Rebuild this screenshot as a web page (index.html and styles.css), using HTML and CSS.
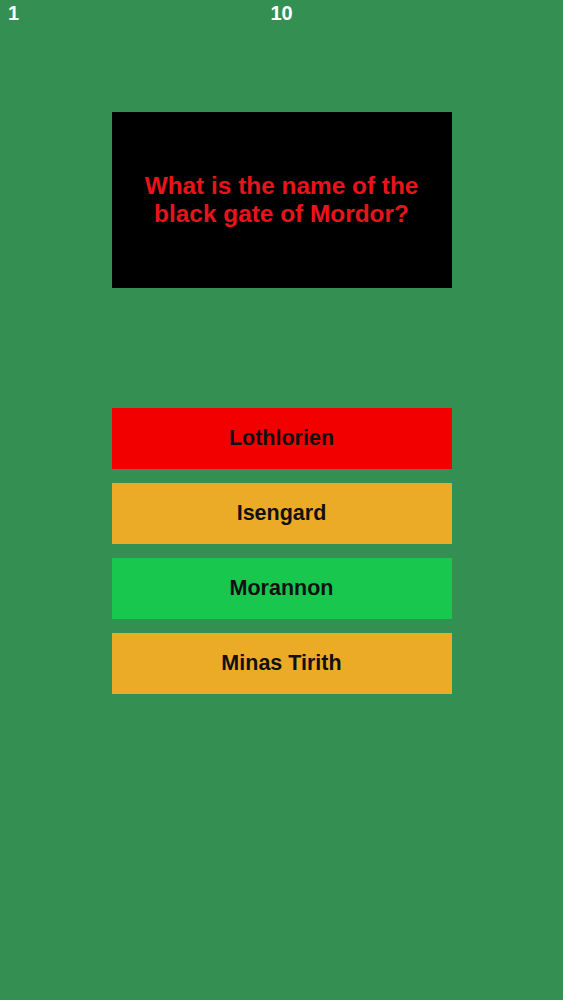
FILE: index.html
```html
<!DOCTYPE html>
<html lang="en">
<head>
    <meta charset="UTF-8">
    <meta name="viewport" content="width=device-width, initial-scale=1.0">
    <title>Quiz</title>
    <link rel="stylesheet" href="styles.css">
</head>
<body>
    <header class="topbar">
        <span class="score">1</span>
        <span class="total">10</span>
        <span></span>
    </header>
    <main class="quiz">
        <div class="question">
            <p>What is the name of the black gate of Mordor?</p>
        </div>
        <div class="answers">
            <button class="answer wrong">Lothlorien</button>
            <button class="answer">Isengard</button>
            <button class="answer right">Morannon</button>
            <button class="answer">Minas Tirith</button>
        </div>
    </main>
</body>
</html>
```

FILE: styles.css
```css
body {
    margin: 0;
    padding: 0;
    background-color: #348f53;
    font-family: "Liberation Sans", Arial, sans-serif;
    height: 1000px;
}
.topbar {
    display: grid;
    grid-template-columns: 1fr auto 1fr;
    height: 28px;
    padding: 3px 8px 0;
    box-sizing: border-box;
    color: white;
    font-weight: bold;
    font-size: 20px;
    line-height: 20px;
}
.total {
    text-align: center;
}
.quiz {
    width: 340px;
    margin: 84px auto 0;
}
.question {
    height: 176px;
    background-color: #000;
    display: flex;
    align-items: center;
    justify-content: center;
    padding: 0 20px;
    box-sizing: border-box;
}
.question p {
    margin: 0;
    color: #e8141b;
    font-size: 24.4px;
    font-weight: bold;
    line-height: 28px;
    text-align: center;
}
.answers {
    margin-top: 120px;
    display: flex;
    flex-direction: column;
    gap: 14px;
}
.answer {
    height: 61px;
    border: none;
    padding: 0;
    background-color: #ebab26;
    color: #111;
    font-family: inherit;
    font-size: 21.5px;
    font-weight: bold;
    cursor: pointer;
}
.answer.wrong {
    background-color: #f20000;
}
.answer.right {
    background-color: #18c84e;
}
```
